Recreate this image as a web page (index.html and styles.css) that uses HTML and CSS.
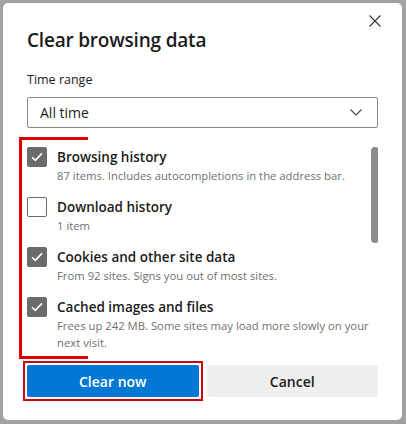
FILE: index.html
```html
<!DOCTYPE html>
<html lang="en">
<head>
<meta charset="utf-8">
<title>Clear browsing data</title>
<link rel="stylesheet" href="styles.css">
</head>
<body>
<div class="dialog">
  <div class="header">
    <h1 class="title">Clear browsing data</h1>
    <button class="close" aria-label="Close">
      <svg width="12" height="12" viewBox="0 0 12 12"><path d="M0.5 0.5 L11.5 11.5 M11.5 0.5 L0.5 11.5" stroke="#333" stroke-width="1.1" fill="none"/></svg>
    </button>
  </div>
  <div class="label">Time range</div>
  <div class="select">
    <span>All time</span>
    <svg width="12" height="7" viewBox="0 0 12 7"><path d="M0.5 0.5 L6 6 L11.5 0.5" stroke="#444" stroke-width="1.1" fill="none"/></svg>
  </div>
  <div class="listwrap">
    <div class="list">
      <div class="item">
        <span class="cb checked"><svg width="12" height="10" viewBox="0 0 12 10"><path d="M1 5.2 L4.3 8.4 L11 1.4" stroke="#fff" stroke-width="1.6" fill="none"/></svg></span>
        <div class="text">
          <div class="name">Browsing history</div>
          <div class="desc">87 items. Includes autocompletions in the address bar.</div>
        </div>
      </div>
      <div class="item">
        <span class="cb"></span>
        <div class="text">
          <div class="name">Download history</div>
          <div class="desc">1 item</div>
        </div>
      </div>
      <div class="item">
        <span class="cb checked"><svg width="12" height="10" viewBox="0 0 12 10"><path d="M1 5.2 L4.3 8.4 L11 1.4" stroke="#fff" stroke-width="1.6" fill="none"/></svg></span>
        <div class="text">
          <div class="name">Cookies and other site data</div>
          <div class="desc">From 92 sites. Signs you out of most sites.</div>
        </div>
      </div>
      <div class="item">
        <span class="cb checked"><svg width="12" height="10" viewBox="0 0 12 10"><path d="M1 5.2 L4.3 8.4 L11 1.4" stroke="#fff" stroke-width="1.6" fill="none"/></svg></span>
        <div class="text">
          <div class="name">Cached images and files</div>
          <div class="desc">Frees up 242 MB. Some sites may load more slowly on your next visit.</div>
        </div>
      </div>
    </div>
    <div class="track"><div class="thumb"></div></div>
  </div>
  <div class="actions">
    <button class="btn primary">Clear now</button>
    <button class="btn secondary">Cancel</button>
  </div>
  <div class="mark-list"></div>
  <div class="mark-btn"></div>
</div>
</body>
</html>
```
FILE: styles.css
```css
html, body {
  margin: 0;
  padding: 0;
}
body {
  background: #a2a2a2;
  width: 406px;
  height: 424px;
  overflow: hidden;
  font-family: "Open Sans", "Noto Sans", "Liberation Sans", sans-serif;
  color: #1b1b1b;
}
.dialog {
  position: relative;
  margin: 3px 0 0 3px;
  width: 399px;
  height: 417px;
  box-sizing: border-box;
  background: #fff;
  border-radius: 5px;
  padding: 0 24px;
}
.header {
  display: flex;
  justify-content: space-between;
  align-items: flex-start;
  height: 64px;
}
.title {
  margin: 23px 0 0 0;
  font-size: 19px;
  line-height: 28px;
  font-weight: 600;
  letter-spacing: -0.2px;
  color: #1b1b1b;
}
.close {
  margin: 12px -3px 0 0;
  padding: 0;
  border: 0;
  background: none;
  width: 12px;
  height: 12px;
  display: flex;
}
.label {
  font-size: 12.5px;
  line-height: 17px;
  color: #1b1b1b;
  margin-top: 4px;
}
.select {
  margin-top: 9px;
  height: 31px;
  box-sizing: border-box;
  border: 1px solid #8a8a8a;
  border-radius: 2px;
  display: flex;
  align-items: center;
  justify-content: space-between;
  padding: 0 15px 0 12px;
  font-size: 14px;
  color: #1b1b1b;
}
.listwrap {
  margin-top: 19px;
  height: 206px;
  display: flex;
  justify-content: space-between;
  overflow: hidden;
}
.list {
  width: 344px;
  display: flex;
  flex-direction: column;
  gap: 13px;
}
.item {
  display: flex;
  gap: 10px;
  align-items: flex-start;
}
.cb {
  flex: none;
  width: 20px;
  height: 20px;
  box-sizing: border-box;
  border: 1px solid #6b6b6b;
  border-radius: 2px;
  display: flex;
  align-items: center;
  justify-content: center;
  background: #fff;
}
.cb.checked {
  background: #6b6b6b;
}
.name {
  font-size: 13.5px;
  line-height: 20px;
  font-weight: 600;
  color: #1b1b1b;
}
.desc {
  font-size: 11.3px;
  line-height: 17px;
  color: #707070;
}
.track {
  width: 8px;
  margin-right: -1px;
}
.thumb {
  width: 8px;
  height: 96px;
  border-radius: 4px;
  background: #8c8c8c;
}
.actions {
  margin-top: 12px;
  display: flex;
  gap: 8px;
}
.btn {
  flex: 1;
  height: 32px;
  border: 0;
  border-radius: 2px;
  font-family: inherit;
  font-size: 14px;
  font-weight: 600;
  padding: 0;
}
.primary {
  background: #0078d4;
  color: #fff;
}
.secondary {
  background: #efefef;
  color: #1b1b1b;
}
.mark-list {
  position: absolute;
  left: 16px;
  top: 134px;
  width: 66px;
  height: 216px;
  border: 3px solid #e00000;
  border-right: 0;
}
.mark-btn {
  position: absolute;
  left: 20px;
  top: 358px;
  width: 176px;
  height: 36px;
  border: 2px solid #d00010;
}
```
